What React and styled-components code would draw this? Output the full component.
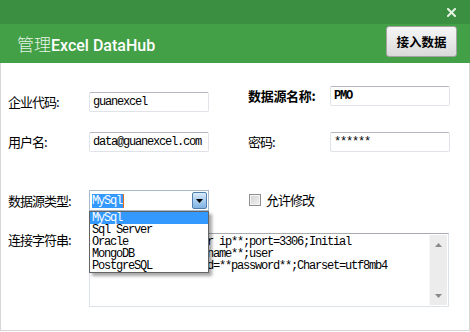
import styled, { createGlobalStyle } from "styled-components";

const GlobalStyle = createGlobalStyle`
  html, body {
    margin: 0;
    padding: 0;
    background: #fff;
  }
  #root {
    width: 470px;
    height: 332px;
  }
`;

const CJK = `"Noto Sans CJK SC", "Noto Sans", sans-serif`;
const MONO = `"Liberation Mono", "Noto Sans CJK SC", monospace`;

const connStr =
  "Data Source=**server ip**;port=3306;Initial Catalog=**database name**;user id=**user**;password=**password**;Charset=utf8mb4";

const dbTypes = ["MySql", "Sql Server", "Oracle", "MongoDB", "PostgreSQL"];

function App() {
  return (
    <>
      <GlobalStyle />
      <StyledDialog>
        <TitleBar>
          <CloseBtn aria-label="close">
            <svg width="9" height="9" viewBox="0 0 9 9">
              <path
                d="M1 1 L8 8 M8 1 L1 8"
                stroke="#e4f2e4"
                strokeWidth="2"
                strokeLinecap="square"
              />
            </svg>
          </CloseBtn>
        </TitleBar>

        <Header>
          <Title>
            <span className="cn">管理</span>
            <span className="en">Excel DataHub</span>
          </Title>
          <ConnectButton>接入数据</ConnectButton>
        </Header>

        <Body>
          <Row>
            <Field $top={6} $w={240}>
              <Label>企业代码:</Label>
              <TextBox>guanexcel</TextBox>
            </Field>
            <Field>
              <Label $bold $wide>数据源名称:</Label>
              <TextBox $bold>PMO</TextBox>
            </Field>
          </Row>

          <Row $gap={20}>
            <Field $w={240}>
              <Label>用户名:</Label>
              <TextBox>data@guanexcel.com</TextBox>
            </Field>
            <Field>
              <Label $wide>密码:</Label>
              <TextBox>******</TextBox>
            </Field>
          </Row>

          <Row $gap={38}>
            <Field $w={240}>
              <Label>数据源类型:</Label>
              <Select>
                <SelectValue>
                  <mark>MySql</mark>
                </SelectValue>
                <ArrowBtn>
                  <svg width="7" height="4" viewBox="0 0 7 4">
                    <path d="M0 0 H7 L3.5 4 Z" fill="#000" />
                  </svg>
                </ArrowBtn>
                <DropList>
                  {dbTypes.map((t, i) => (
                    <DropItem key={t} $active={i === 0}>
                      {t}
                    </DropItem>
                  ))}
                </DropList>
              </Select>
            </Field>
            <CheckField>
              <CheckBox />
              <span>允许修改</span>
            </CheckField>
          </Row>

          <Row $gap={22}>
            <Label>连接字符串:</Label>
            <TextArea>
              <div className="text">{connStr}</div>
              <ScrollBar>
                <svg width="7" height="4" viewBox="0 0 7 4">
                  <path d="M3.5 0 L7 4 H0 Z" fill="#8a8a8a" />
                </svg>
                <svg width="7" height="4" viewBox="0 0 7 4">
                  <path d="M0 0 H7 L3.5 4 Z" fill="#8a8a8a" />
                </svg>
              </ScrollBar>
            </TextArea>
          </Row>
        </Body>
      </StyledDialog>
    </>
  );
}

export default App;

/****************** styled component ***************/

const StyledDialog = styled.div`
  width: 470px;
  height: 332px;
  display: flex;
  flex-direction: column;
  font-family: ${CJK};
  color: #000;
`;

const TitleBar = styled.div`
  height: 24px;
  background: #3a8f40;
  display: flex;
  align-items: center;
  justify-content: flex-end;
  padding-right: 14px;
`;

const CloseBtn = styled.div`
  width: 9px;
  height: 9px;
  display: flex;
`;

const Header = styled.div`
  height: 39px;
  background: #43a047;
  display: flex;
  align-items: center;
  justify-content: space-between;
  padding: 0 13px 0 17px;
  box-sizing: border-box;
`;

const Title = styled.div`
  display: flex;
  align-items: baseline;
  color: #fff;

  .cn {
    font-family: ${CJK};
    font-size: 17px;
    font-weight: 300;
    color: #e6f3e6;
  }
  .en {
    font-family: Roboto, "Liberation Sans", sans-serif;
    font-size: 16px;
    font-weight: 500;
  }
`;

const ConnectButton = styled.div`
  width: 71px;
  height: 31px;
  box-sizing: border-box;
  margin-bottom: 4px;
  border: 1px solid #a3a3a3;
  border-radius: 3px;
  background: linear-gradient(#f6f6f6, #e9e9e9 50%, #d9d9d9);
  display: flex;
  align-items: center;
  justify-content: center;
  font-size: 12.5px;
  font-weight: 700;
  color: #000;
`;

const Body = styled.div`
  flex: 1;
  background: #fff;
  border: 1px solid #d6d6d6;
  border-top: none;
  margin-bottom: 1px;
  padding: 23px 0 0 7px;
  display: flex;
  flex-direction: column;
`;

const Row = styled.div`
  display: flex;
  align-items: flex-start;
  margin-top: ${(p) => p.$gap || 0}px;
`;

const Field = styled.div`
  flex: none;
  width: ${(p) => (p.$w ? `${p.$w}px` : "auto")};
  display: flex;
  align-items: center;
  margin-top: ${(p) => p.$top || 0}px;
`;

const Label = styled.div`
  width: ${(p) => (p.$wide ? 82 : 81)}px;
  flex-shrink: 0;
  font-size: 13px;
  line-height: 14px;
  letter-spacing: ${(p) => (p.$bold ? "-0.3px" : "-1px")};
  font-weight: ${(p) => (p.$bold ? 700 : 400)};
  white-space: nowrap;
`;

const TextBox = styled.div`
  width: 120px;
  height: 20px;
  box-sizing: border-box;
  border: 1px solid #e0e3e8;
  border-top-color: #b4b7bd;
  border-radius: 2px;
  padding: 0 3px;
  display: flex;
  align-items: center;
  font-family: ${MONO};
  font-size: 12px;
  letter-spacing: -1.2px;
  font-weight: ${(p) => (p.$bold ? 700 : 400)};
`;

const Select = styled.div`
  position: relative;
  width: 120px;
  height: 21px;
  box-sizing: border-box;
  border: 1px solid #a9b9cc;
  display: flex;
`;

const SelectValue = styled.div`
  flex: 1;
  display: flex;
  align-items: center;
  padding-left: 2px;
  font-family: ${MONO};
  font-size: 12px;
  letter-spacing: -1.2px;

  mark {
    background: #3399ff;
    color: #fff;
    padding-right: 1px;
    box-shadow: 1px 0 0 #e07020;
  }
`;

const ArrowBtn = styled.div`
  width: 15px;
  margin: 1px;
  box-sizing: border-box;
  border: 1px solid #4f7fae;
  border-radius: 2px;
  background: linear-gradient(#d9ebfa, #a9cdee 50%, #82b3e2);
  display: flex;
  align-items: center;
  justify-content: center;
`;

const DropList = styled.div`
  position: absolute;
  top: 20px;
  left: -1px;
  width: 120px;
  box-sizing: border-box;
  background: #fff;
  border: 1px solid #646464;
  box-shadow: 3px 3px 3px rgba(0, 0, 0, 0.35);
  z-index: 2;
`;

const DropItem = styled.div`
  height: 12px;
  line-height: 12px;
  padding-left: 2px;
  font-family: ${MONO};
  font-size: 12px;
  letter-spacing: -1.2px;
  background: ${(p) => (p.$active ? "#3399ff" : "transparent")};
  color: ${(p) => (p.$active ? "#fff" : "#000")};
`;

const CheckField = styled.div`
  display: flex;
  align-items: center;
  gap: 5px;
  margin-left: 1px;
  font-size: 13px;
  letter-spacing: -1px;
`;

const CheckBox = styled.div`
  width: 12px;
  height: 12px;
  box-sizing: border-box;
  border: 1px solid #8e8f8f;
  box-shadow: inset 0 0 0 1px #f4f4f4;
  background: linear-gradient(135deg, #d2d2d2, #f2f2f2);
`;

const TextArea = styled.div`
  width: 360px;
  height: 74px;
  box-sizing: border-box;
  border: 1px solid #dde2e8;
  border-top-color: #a8abb0;
  display: flex;

  .text {
    flex: 1;
    padding: 2px 2px 0 3px;
    font-family: ${MONO};
    font-size: 12px;
    line-height: 12px;
    letter-spacing: -1.2px;
    white-space: pre-wrap;
    overflow: hidden;
  }
`;

const ScrollBar = styled.div`
  width: 17px;
  margin: 1px 1px 1px 0;
  background: #ececec;
  border-left: 1px solid #f6f6f6;
  display: flex;
  flex-direction: column;
  align-items: center;
  justify-content: space-between;
  padding: 8px 0 7px;
`;
